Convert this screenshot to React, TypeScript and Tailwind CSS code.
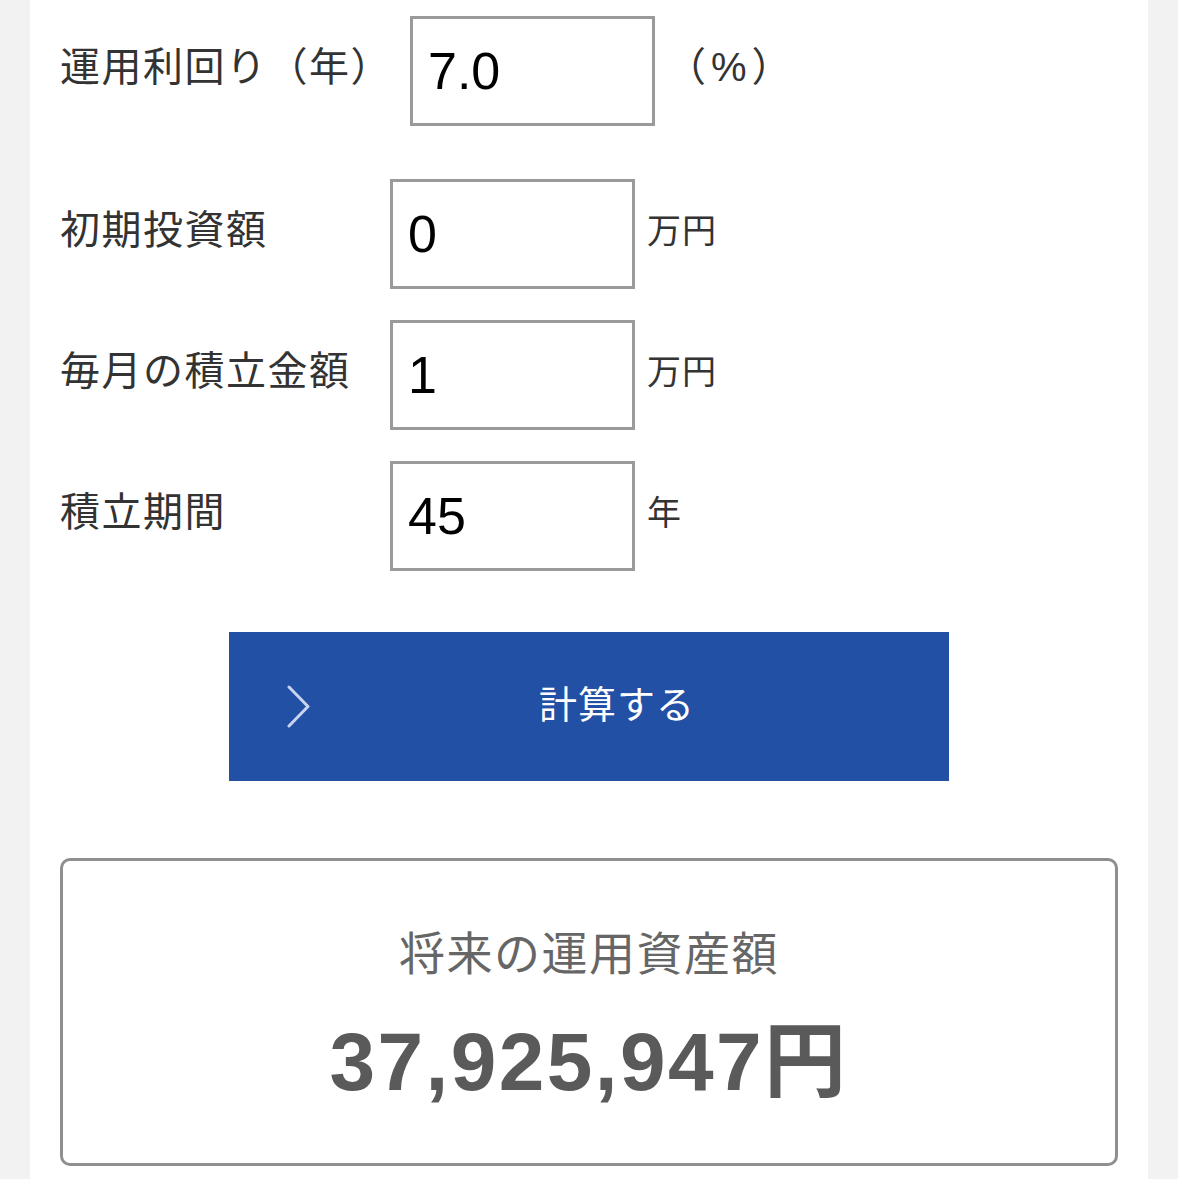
import { useState } from 'react';

const jp = "font-['Liberation_Sans','Noto_Sans_CJK_JP',sans-serif]";

function Field({ label, value, unit, onChange }: { label: string; value: string; unit: string; onChange: (v: string) => void }) {
  return (
    <div className="flex items-center">
      <div className="w-[330px] shrink-0 whitespace-nowrap text-[40px] leading-none tracking-[1.5px] text-[#333] -mt-[8px]">
        {label}
      </div>
      <input
        value={value}
        onChange={(e) => onChange(e.target.value)}
        className="w-[245px] h-[110px] border-[3px] border-[#9a9a9a] bg-white pl-[15px] text-[52px] text-black outline-none"
      />
      <span className="ml-[12px] text-[34px] leading-none tracking-[1px] text-[#333] -mt-[6px]">{unit}</span>
    </div>
  );
}

export default function App() {
  const [rate, setRate] = useState('7.0');
  const [initial, setInitial] = useState('0');
  const [monthly, setMonthly] = useState('1');
  const [years, setYears] = useState('45');

  return (
    <div className={`min-h-screen bg-[#f2f2f2] px-[30px] ${jp}`}>
      <div className="bg-white px-[30px] pt-[16px] pb-[40px]">
        {/* 運用利回り */}
        <div className="flex items-center">
          <div className="w-[350px] shrink-0 whitespace-nowrap text-[40px] leading-none tracking-[1.5px] text-[#333] -mt-[8px]">
            運用利回り（年）
          </div>
          <input
            value={rate}
            onChange={(e) => setRate(e.target.value)}
            className="w-[245px] h-[110px] border-[3px] border-[#9a9a9a] bg-white pl-[15px] text-[52px] text-black outline-none"
          />
          <span className="ml-[11px] text-[40px] leading-none tracking-[5px] text-[#333] -mt-[8px]">（%）</span>
        </div>

        <div className="mt-[53px] flex flex-col gap-[31px]">
          <Field label="初期投資額" value={initial} unit="万円" onChange={setInitial} />
          <Field label="毎月の積立金額" value={monthly} unit="万円" onChange={setMonthly} />
          <Field label="積立期間" value={years} unit="年" onChange={setYears} />
        </div>

        {/* 計算ボタン */}
        <div className="mt-[61px] flex justify-center">
          <button className="relative w-[720px] h-[149px] bg-[#2150a5] pl-[56px] text-white text-[38px] tracking-[1px] flex items-center justify-center">
            <svg
              className="absolute left-[57px] top-[53px]"
              width="26"
              height="43"
              viewBox="0 0 26 43"
              fill="none"
            >
              <polyline points="3,2 22,21.5 3,41" stroke="#c9d5ef" strokeWidth="3" strokeLinecap="round" strokeLinejoin="round" />
            </svg>
            <span className="-mt-[2px]">計算する</span>
          </button>
        </div>

        {/* 結果 */}
        <div className="mt-[77px] h-[308px] rounded-[10px] border-[3px] border-[#8f8f8f] flex flex-col items-center pt-[70px]">
          <div className="text-[46px] leading-none tracking-[1.5px] text-[#666]">将来の運用資産額</div>
          <div className="mt-[44px] text-[82px] leading-none font-bold tracking-[2.4px] text-[#5a5a5a]">37,925,947円</div>
        </div>
      </div>
    </div>
  );
}
